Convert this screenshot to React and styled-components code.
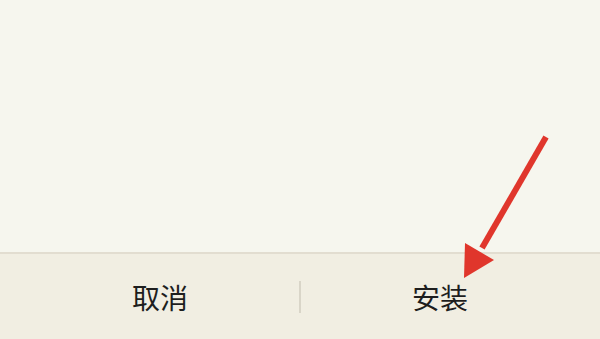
import styled, { createGlobalStyle } from "styled-components";

const Global = createGlobalStyle`
  html, body { margin: 0; padding: 0; }
  body {
    width: 600px;
    height: 339px;
    overflow: hidden;
    font-family: "Noto Sans CJK SC", "Noto Sans", sans-serif;
  }
`;

const Page = styled.div`
  position: relative;
  width: 600px;
  height: 339px;
  display: flex;
  flex-direction: column;
  background: #f6f6ee;
`;

const Content = styled.div`
  flex: 1;
`;

const Footer = styled.div`
  height: 85px;
  border-top: 2px solid #e2ddd0;
  background: #f1eee2;
  display: flex;
  align-items: center;
  padding: 0 21px;
`;

const Action = styled.button`
  flex: 1;
  height: 100%;
  border: none;
  background: transparent;
  font-family: inherit;
  font-size: 28px;
  color: #1e1e1e;
  padding: 0;
  cursor: pointer;
`;

const Divider = styled.div`
  width: 2px;
  height: 32px;
  background: #d9d5c8;
`;

const Arrow = styled.svg`
  position: absolute;
  left: 0;
  top: 0;
  pointer-events: none;
`;

export default function App() {
  return (
    <Page>
      <Global />
      <Content />
      <Footer>
        <Action>取消</Action>
        <Divider />
        <Action>安装</Action>
      </Footer>
      <Arrow width="600" height="339" viewBox="0 0 600 339">
        <line x1="546" y1="137" x2="482" y2="248" stroke="#e0362c" strokeWidth="6" strokeLinecap="butt" />
        <polygon points="464,278 465,243 494,260" fill="#e0362c" />
      </Arrow>
    </Page>
  );
}
